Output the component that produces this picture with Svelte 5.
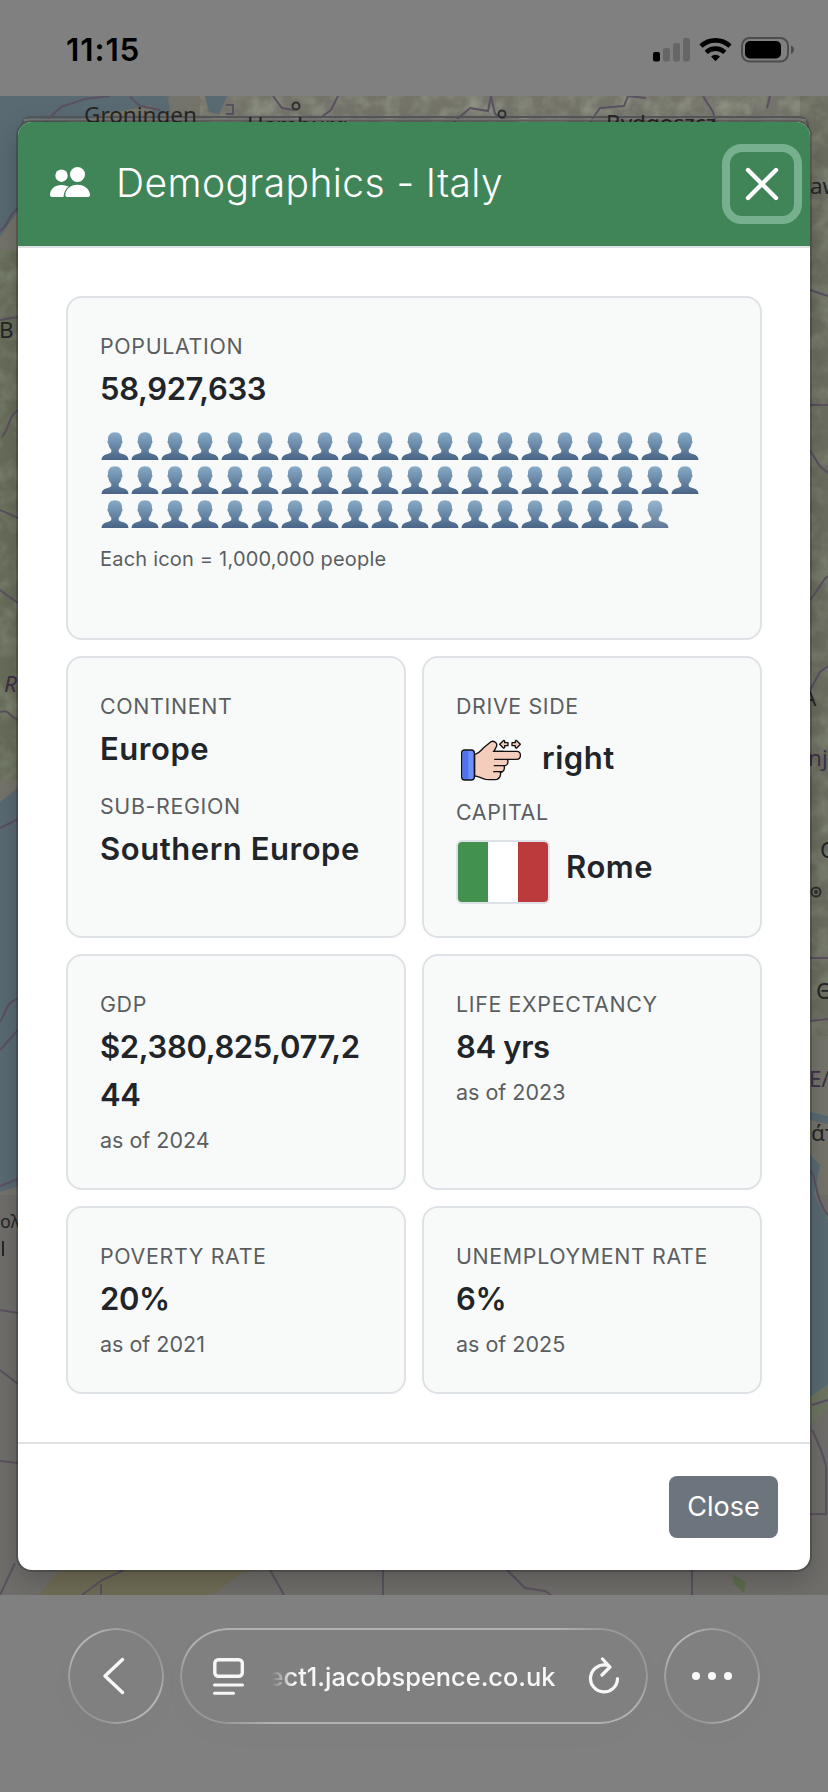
<script lang="ts">
	const population = 58927633
	const perIcon = 1000000

	const icons = Array.from({ length: Math.ceil(population / perIcon) }, (_, i) =>
		Math.min(1, population / perIcon - i)
	)

	const stats = [
		{ id: 'gdp', label: 'GDP', value: '$2,380,825,077,244', year: 2024 },
		{ id: 'life', label: 'Life expectancy', value: '84 yrs', year: 2023 },
		{ id: 'poverty', label: 'Poverty rate', value: '20%', year: 2021 },
		{ id: 'unemployment', label: 'Unemployment rate', value: '6%', year: 2025 }
	]
</script>

<div class="phone">
	<header class="status">
		<span class="time">11:15</span>
		<svg class="signals" width="142" height="26" viewBox="653 37 142 26">
			<rect x="653" y="52" width="7" height="9.5" rx="2" />
			<g fill="#666">
				<rect x="663" y="48" width="7" height="13.5" rx="2" />
				<rect x="673" y="43" width="7" height="18.5" rx="2" />
				<rect x="683" y="38" width="7" height="23.5" rx="2" />
			</g>
			<g fill="none" stroke="#000" stroke-width="4.6">
				<path d="M701 46.2a21 21 0 0 1 29 0" />
				<path d="M706.2 52.3a13.500 13.500 0 0 1 18.600 0" />
			</g>
			<path d="M715.500 61.200l-4.500-4.700a6.500 6.500 0 0 1 9 0z" />
			<rect x="742" y="38" width="46" height="23.500" rx="7.500" fill="none" stroke="#4d4d4d" stroke-width="2" />
			<rect x="745" y="41" width="36" height="17.500" rx="5" />
			<path d="M791 45.500c4 1.500 4 7 0 8.500z" fill="#4d4d4d" />
		</svg>
	</header>

	<main class="page">
		<svg class="map" width="828" height="1499" viewBox="0 96 828 1499">
			<defs>
				<filter id="terrain" x="0" y="0" width="100%" height="100%">
					<feTurbulence type="fractalNoise" baseFrequency="0.06" numOctaves="3" seed="8" />
					<feColorMatrix values="0 0 0 0 0.38  0 0 0 0 0.44  0 0 0 0 0.32  2 0 0 0 -0.8" />
				</filter>
			</defs>
			<rect y="96" width="828" height="1499" fill="#75746b" />
			<rect y="1195" width="828" height="400" fill="#706e6b" />
			<rect x="200" y="96" width="628" height="40" opacity="0.5" filter="url(#terrain)" />
			<rect y="250" width="30" height="530" fill="#686d5b" />
			<rect y="250" width="30" height="530" opacity="0.35" filter="url(#terrain)" />
			<rect x="800" y="96" width="28" height="940" fill="#6b6d60" />
			<rect x="800" y="96" width="28" height="940" opacity="0.35" filter="url(#terrain)" />
			<g fill="#596a72">
				<path d="M0 96h170l-14 8-40 8-50 10-48 14v75l-18 26z" />
				<path d="M205 96h22l-8 18-10-2zM150 106l18-8 2 14-14 4z" />
				<path d="M0 802l20-16v400l-20 6z" />
				<path d="M806 1150l14 15-6 30 14 25v185l-22 20z" />
				<path d="M810 1112l18 4v8l-18-4z" />
			</g>
			<path d="M806 1400l22-16v25l-22 20z" fill="#6d7562" />
			<path d="M60 1570h194c-20 5-28 17-42 25H38z" fill="#706c56" />
			<path d="M732 1574l14 8-2 11-10-9z" fill="#5e6d50" />
			<g fill="none" stroke="#5b5160" stroke-width="2">
				<path d="M45 122l16-15 24-8 25-3M130 97l10 9 20 4M226 105h7v9h-7M273 96l9 12 12 2M338 96l-7 14-11 8M454 122l16-14 18 3 3-15 4 18 11 6M590 122l10-14 24-2 4-10 18 2M703 96l10 16 4 14M770 96l-3 12" />
				<path d="M0 231c8-4 10-20 18-22M0 320l18-3M2 437c10-12 4-18 16-27M0 510l18 8M0 590l18 13M0 712c10-3 8 4 18 8M0 828l18-9M0 1022c6-8 5-20 18-23M0 1050l18-20M0 1186l18-7M0 1310l18 3M0 1370l18 14M0 1461l18 2M0 1595l15-32" />
				<path d="M810 290l18 6M810 405h18M810 450l9 15 9 8M810 600c10-12 12-20 18-24M810 690l10-18 8-6M810 958h18M810 1021l18-2M810 1170c8 10 3 24 18 46M812 1405l16-5M812 1430c10 20 12 28 14 36v48h-16M270 1570l14 25M383 1570v25M507 1570l18 18 20 3 6 4M692 1570v25M82 1595l20-15 22-10M101 1584v11" />
			</g>
			<path d="M22 126v-1a8 8 0 0 1 8-8h770a8 8 0 0 1 8 8v3" fill="none" stroke="#55585a" stroke-width="2" />
			<path d="M24 120h782" stroke="#777" stroke-width="2" />
			<g class="towns">
				<circle cx="296" cy="106" r="3.500" />
				<circle cx="502" cy="114" r="3.500" />
				<circle cx="816" cy="892" r="4.500" />
				<circle cx="816" cy="892" r="1" />
				<text x="84" y="123">Groningen</text>
				<text x="247" y="133">Hamburg</text>
				<text x="606" y="131">Bydgoszcz</text>
				<text x="810" y="194">aw</text>
				<text x="-1" y="338">B</text>
				<text class="region" x="4" y="692">R</text>
				<text x="802" y="706">A</text>
				<text class="region upright" x="808" y="766">nj</text>
				<text x="820" y="858">O</text>
				<text x="816" y="999">Θ</text>
				<text class="region upright" x="809" y="1087">ΕΛ</text>
				<text x="811" y="1141">άτ</text>
				<text class="tiny" x="0" y="1228">ολ</text>
				<path d="M3 1241v15" stroke="#262626" stroke-width="2" />
			</g>
		</svg>

		<div class="modal">
			<div class="modal-header">
				<svg class="people" width="40" height="30" viewBox="0 0 40 30">
					<circle cx="11.500" cy="8.700" r="6.200" />
					<circle cx="27.500" cy="7.500" r="7.500" />
					<path d="M0 28C0 22 5 18 11.500 18q4 0 7 1.500Q14 23 13.500 30H2q-2 0-2-2z" />
					<path d="M15.300 28C15.500 22 20.500 17.700 27.500 17.700S39.800 22 40 28q0 2-2 2H17.300q-2 0-2-2z" />
				</svg>
				<h1>Demographics - Italy</h1>
				<button class="close" aria-label="Close dialog">
					<svg width="34" height="34" viewBox="0 0 34 34">
						<path d="M3 3l28 28M31 3L3 31" />
					</svg>
				</button>
			</div>

			<div class="modal-body">
				<section class="card wide">
					<div class="label">Population</div>
					<div class="value number">{population.toLocaleString('en-US')}</div>
					<div class="crowd">
						{#each icons as part, i (i)}
							<svg width="30" height="28" viewBox="0 0 30 28" opacity={part < 1 ? 0.86 : 1}>
								<defs>
									<linearGradient id="bust-{i}" x1="0" y1="0" x2="0" y2="28" gradientUnits="userSpaceOnUse">
										<stop offset="0" stop-color="#89acc8" />
										<stop offset="1" stop-color="#496486" />
									</linearGradient>
								</defs>
								<path
									fill="url(#bust-{i})"
									d="M14 .3c-4.800 0-7.400 3.200-7 8.200-.9.500-.6 2.600.4 3.300.5 3 1.400 4.500 2.900 6v2c-.5 1.500-2.300 1.700-4.600 2.400C2.500 23 .7 24.500.5 28h27c-.2-3.500-2-5-5.200-5.800-2.300-.7-4.100-.9-4.600-2.400v-2c1.500-1.500 2.400-3 2.900-6 1-.7 1.300-2.800.4-3.300.4-5-2.200-8.200-7-8.200z"
								/>
							</svg>
						{/each}
					</div>
					<div class="note small">Each icon = 1,000,000 people</div>
				</section>

				<section class="card">
					<div class="label">Continent</div>
					<div class="value">Europe</div>
					<div class="label spaced">Sub-region</div>
					<div class="value">Southern Europe</div>
				</section>

				<section class="card">
					<div class="label">Drive side</div>
					<div class="pair drive">
						<svg width="64" height="46" viewBox="90 54 192 138" stroke="#111" stroke-width="4" stroke-linejoin="round" stroke-linecap="round">
							<path d="M134 106c12-3 18-10 27-20l18-15c6-6 12-5 17-1s6 9 2 15l-6 12h68c15 0 15 23 0 24h-28c4 8 1 16-5 18-3 0-5 1-5 1 3 9 1 15-6 19l-5 1c2 9-2 17-10 21-8 2-22 1-34 0-15-3-22-10-33-10z" fill="#f4cdbd" />
							<rect x="95" y="93" width="38" height="90" rx="9" fill="#6f90fb" />
							<path d="M98 102q1-6 7-6h10v84h-10q-6 0-7-6z" fill="#4f73f0" stroke="none" />
							<path d="M190 97h30M194 121h38M193 140h32M191 158h26" fill="none" />
							<path d="M209 76l11-11q5-2 4 6h10v9h-10q1 8-4 7zM271 76l-11-11q-5-2-4 6h-10v9h10q-1 8 4 7z" fill="#f4cdbd" />
						</svg>
						<span class="value">right</span>
					</div>
					<div class="label">Capital</div>
					<div class="pair capital">
						<span class="flag"><i></i><i></i><i></i></span>
						<span class="value">Rome</span>
					</div>
				</section>

				{#each stats as stat (stat.id)}
					<section class="card">
						<div class="label">{stat.label}</div>
						<div class="value number">{stat.value}</div>
						<div class="note">as of {stat.year}</div>
					</section>
				{/each}
			</div>

			<div class="modal-footer">
				<button class="btn">Close</button>
			</div>
		</div>
	</main>

	<footer class="browser">
		<div class="glass round">
			<svg width="24" height="38" viewBox="0 0 24 38">
				<path d="M21.500 2.500L4 19l17.500 16.500" stroke-width="3.400" />
			</svg>
		</div>
		<div class="glass address">
			<svg width="32" height="37" viewBox="0 0 32 37">
				<rect x="1.800" y="1.800" width="27.500" height="16.500" rx="3.500" stroke-width="3.400" />
				<path d="M1.500 27h28M1.500 35.200h19" stroke-width="3" />
			</svg>
			<div class="url">ect1.jacobspence.co.uk</div>
			<svg width="32" height="38" viewBox="0 0 32 38">
				<path d="M19 8.300A13.500 13.500 0 1 0 29.500 21.500M14.500 2l7.500 8-8 8" stroke-width="3.200" />
			</svg>
		</div>
		<div class="glass round">
			<svg class="dots" width="40" height="8" viewBox="0 0 40 8">
				<circle cx="4" cy="4" r="4" />
				<circle cx="20" cy="4" r="4" />
				<circle cx="36" cy="4" r="4" />
			</svg>
		</div>
	</footer>
</div>

<style>
	:global(body) {
		background: #808080;
	}

	.phone {
		display: flex;
		flex-direction: column;
		width: 828px;
		height: 1792px;
		overflow: hidden;
		background: #808080;
		color: #212529;
		font-family: Inter, 'Open Sans', sans-serif;
	}

	.status {
		display: flex;
		justify-content: space-between;
		align-items: center;
		box-sizing: border-box;
		height: 96px;
		padding: 3px 33px 0 66px;
	}

	.time {
		color: #000;
		font-size: 31.5px;
		font-weight: 600;
		letter-spacing: 0.9px;
	}

	.page {
		position: relative;
		height: 1499px;
		padding: 26px 18px 25px;
		box-sizing: border-box;
		overflow: hidden;
	}

	.map {
		position: absolute;
		inset: 0;
	}

	.towns {
		font-family: 'Noto Sans', sans-serif;
		font-size: 22.5px;
		fill: #262626;
	}

	.towns circle {
		fill: none;
		stroke: #303030;
		stroke-width: 2;
	}

	.region {
		fill: #40314a;
		font-style: italic;
	}

	.upright {
		font-style: normal;
	}

	.tiny {
		font-size: 18px;
	}

	.modal {
		position: relative;
		display: flex;
		flex-direction: column;
		height: 1448px;
		background: #fff;
		border-radius: 14px;
		box-shadow:
			0 0 0 2px rgba(0, 0, 0, 0.18),
			0 10px 28px rgba(0, 0, 0, 0.22);
	}

	.modal-header {
		display: flex;
		align-items: center;
		box-sizing: border-box;
		height: 126px;
		padding: 0 8px 0 32px;
		background: #408558;
		border-bottom: 2px solid #dee2e6;
		border-radius: 14px 14px 0 0;
	}

	.people {
		fill: #fff;
		margin-bottom: 4px;
	}

	h1 {
		flex: 1;
		margin: 0 0 3px 26px;
		color: #fff;
		font-size: 39px;
		font-weight: 350;
		letter-spacing: 0.4px;
	}

	.close {
		display: flex;
		align-items: center;
		justify-content: center;
		width: 80px;
		height: 80px;
		padding: 0;
		border: 8px solid #76b08f;
		border-radius: 20px;
		background: none;
	}

	.close path {
		stroke: #fff;
		stroke-width: 4.4;
		stroke-linecap: round;
	}

	.modal-body {
		display: grid;
		grid-template-columns: 1fr 1fr;
		grid-template-rows: 344px 282px 236px 188px;
		gap: 16px;
		padding: 48px;
	}

	.card {
		box-sizing: border-box;
		min-width: 0;
		padding: 31px 32px 0;
		background: #f8faf9;
		border: 2px solid #dee2e6;
		border-radius: 16px;
	}

	.wide {
		grid-column: span 2;
	}

	.label {
		color: #5b5e61;
		font-size: 21.4px;
		line-height: 34px;
		letter-spacing: 0.65px;
		text-transform: uppercase;
		white-space: nowrap;
	}

	.spaced {
		margin-top: 16px;
	}

	.value {
		margin-top: 2px;
		font-size: 31px;
		font-weight: 580;
		line-height: 48px;
		letter-spacing: 0.55px;
		overflow-wrap: anywhere;
	}

	.number {
		letter-spacing: -0.35px;
	}

	.note {
		margin-top: 4px;
		color: #5b5e61;
		font-size: 21.5px;
		line-height: 34px;
	}

	.crowd {
		display: flex;
		flex-wrap: wrap;
		row-gap: 6px;
		margin-top: 19px;
		padding-left: 1px;
	}

	.small {
		margin-top: 14px;
		font-size: 20px;
		letter-spacing: 0.2px;
	}

	.pair {
		display: flex;
		align-items: center;
	}

	.drive {
		height: 72px;
		gap: 18px;
		padding-left: 4px;
	}

	.drive svg {
		margin-top: 1px;
	}

	.drive .value {
		margin: 0 0 2px;
	}

	.capital {
		gap: 16px;
		height: 85px;
	}

	.capital .value {
		margin: 0 0 10px;
	}

	.flag {
		display: flex;
		box-sizing: border-box;
		width: 94px;
		height: 64px;
		overflow: hidden;
		border: 2px solid #dee2e6;
		border-radius: 6px;
	}

	.flag i {
		flex: 1;
		background: #fff;
		&:first-child {
			background: #42914f;
		}
		&:last-child {
			background: #bc3a3c;
		}
	}

	.modal-footer {
		display: flex;
		justify-content: flex-end;
		align-items: center;
		flex: 1;
		padding: 0 32px;
		border-top: 2px solid #dee2e6;
	}

	.btn {
		width: 109px;
		height: 62px;
		padding: 0 0 2px;
		border: none;
		border-radius: 8px;
		background: #6c757d;
		color: #fff;
		font: inherit;
		font-size: 27px;
	}

	.browser {
		display: flex;
		align-items: flex-start;
		gap: 16px;
		padding: 33px 68px 0;
	}

	.glass {
		position: relative;
		display: flex;
		align-items: center;
		box-sizing: border-box;
		height: 96px;
		border-radius: 48px;
		box-shadow: 0 10px 40px rgba(0, 0, 0, 0.015);
		/* rim light: bright top-left and bottom-right, fading at the other corners */
		&::before {
			content: '';
			position: absolute;
			inset: 0;
			padding: 1.6px;
			border-radius: inherit;
			background: linear-gradient(45deg, #8e8e8e 12%, #b4b4b4 40%, #b4b4b4 60%, #8e8e8e 88%);
			mask:
				linear-gradient(#000 0 0) content-box exclude,
				linear-gradient(#000 0 0);
		}
	}

	.glass svg {
		fill: none;
		stroke: #f7f7f7;
		stroke-linecap: round;
		stroke-linejoin: round;
	}

	.round {
		justify-content: center;
		width: 96px;
	}

	.round svg {
		margin-right: 7px;
	}

	.round .dots {
		margin: 0;
		fill: #f7f7f7;
		stroke: none;
	}

	.address {
		flex: 1;
		justify-content: space-between;
		padding: 0 28px 0 33px;
		&::before {
			background: linear-gradient(45deg, #989898 8%, #b0b0b0 16%, #b0b0b0 84%, #989898 92%);
		}
	}

	.url {
		display: flex;
		justify-content: flex-end;
		width: 284px;
		margin-right: 6px;
		overflow: hidden;
		color: #f7f7f7;
		font-size: 25.4px;
		font-weight: 500;
		mask-image: linear-gradient(90deg, transparent, #000 22px);
	}
</style>
